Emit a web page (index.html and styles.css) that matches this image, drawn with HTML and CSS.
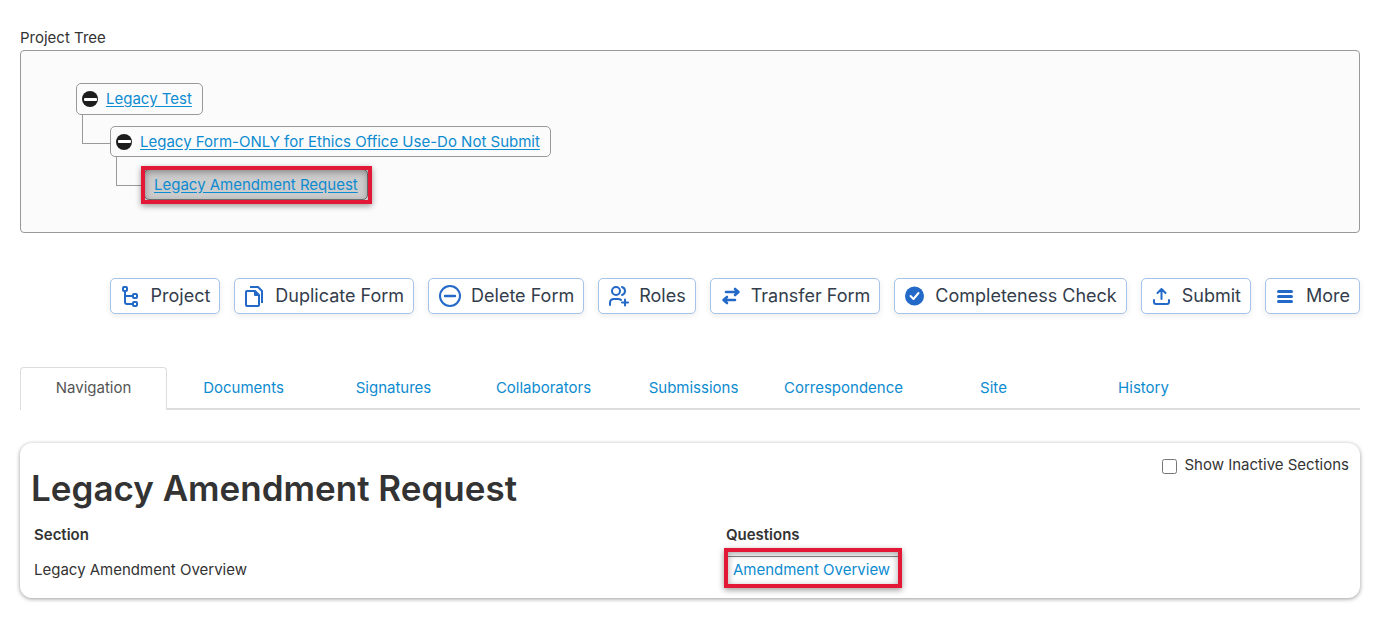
FILE: index.html
```html
<!DOCTYPE html>
<html lang="en">
<head>
<meta charset="utf-8">
<meta name="viewport" content="width=device-width, initial-scale=1">
<title>Legacy Amendment Request</title>
<link rel="stylesheet" href="styles.css">
</head>
<body>
<section class="project">
  <h2 class="project-label">Project Tree</h2>
  <div class="tree">
    <div class="node">
      <button class="toggle" type="button" aria-label="Collapse"></button>
      <a href="#">Legacy Test</a>
    </div>
    <div class="branch">
      <span class="connector"></span>
      <div class="branch-body">
        <div class="node">
          <button class="toggle" type="button" aria-label="Collapse"></button>
          <a href="#">Legacy Form-ONLY for Ethics Office Use-Do Not Submit</a>
        </div>
        <div class="branch">
          <span class="connector"></span>
          <div class="branch-body">
            <div class="node node-current"><a href="#">Legacy Amendment Request</a></div>
          </div>
        </div>
      </div>
    </div>
  </div>
</section>

<div class="actions">
  <button class="action" type="button">
    <svg width="20" height="24" viewBox="0 0 20 24" fill="none" stroke="currentColor" stroke-width="2"><rect x="2" y="3" width="4" height="4" rx="1"/><path d="M4 7v11q0 2 2 2h6M4 12h8"/><rect x="12" y="10" width="4" height="4" rx="1"/><rect x="12" y="18" width="4" height="4" rx="1"/></svg>
    Project</button>
  <button class="action" type="button">
    <svg width="20" height="24" viewBox="0 0 20 24" fill="none" stroke="currentColor" stroke-width="2" stroke-linejoin="round"><path d="M2 7h8l4 4v10q0 1-1 1H2q-1 0-1-1V8q0-1 1-1z"/><path d="M10 7v4h4" fill="currentColor"/><path d="M5 3h8l4 4v12"/></svg>
    Duplicate Form</button>
  <button class="action" type="button">
    <svg width="22" height="24" viewBox="0 0 22 24" fill="none" stroke="currentColor" stroke-width="2"><circle cx="11" cy="12" r="10"/><path d="M6 12h10" stroke-width="2.4" stroke-linecap="round"/></svg>
    Delete Form</button>
  <button class="action" type="button">
    <svg width="20" height="24" viewBox="0 0 20 24" fill="none" stroke="currentColor" stroke-width="2" stroke-linecap="round"><circle cx="7" cy="7" r="4"/><path d="M13 3q3 1 3 4t-3 4M1 21v-2q0-4 4-4h4q2 0 3 1M16 15.500v6M13 18.500h6"/></svg>
    Roles</button>
  <button class="action" type="button">
    <svg width="20" height="24" viewBox="0 0 20 24" fill="none" stroke="currentColor" stroke-width="2.600" stroke-linecap="round" stroke-linejoin="round"><path d="M5 8h12M14 5l3.500 3-3.500 3M14 16H3M6 13l-3.500 3 3.500 3"/></svg>
    Transfer Form</button>
  <button class="action" type="button">
    <svg width="20" height="24" viewBox="0 0 20 24" fill="none"><circle cx="9.500" cy="12" r="9.500" fill="currentColor"/><path d="M5.500 12l3 3 5-6" stroke="#fff" stroke-width="2" stroke-linecap="round" stroke-linejoin="round"/></svg>
    Completeness Check</button>
  <button class="action" type="button">
    <svg width="20" height="24" viewBox="0 0 20 24" fill="none" stroke="currentColor" stroke-width="2" stroke-linecap="round" stroke-linejoin="round"><path d="M9.500 15V5M5.500 9l4-4 4 4M2 16v2q0 2 2 2h11q2 0 2-2v-2"/></svg>
    Submit</button>
  <button class="action" type="button">
    <svg width="20" height="24" viewBox="0 0 20 24" fill="none" stroke="currentColor" stroke-width="3" stroke-linecap="round"><path d="M2.500 7.500h13M2.500 12.500h13M2.500 17.500h13"/></svg>
    More</button>
</div>

<nav class="tabs">
  <a class="tab tab-active" href="#">Navigation</a>
  <a class="tab" href="#">Documents</a>
  <a class="tab" href="#">Signatures</a>
  <a class="tab" href="#">Collaborators</a>
  <a class="tab" href="#">Submissions</a>
  <a class="tab" href="#">Correspondence</a>
  <a class="tab" href="#">Site</a>
  <a class="tab" href="#">History</a>
</nav>

<main class="card">
  <div class="card-head">
    <h1 class="card-title">Legacy Amendment Request</h1>
    <label class="inactive"><input class="inactive-box" type="checkbox">Show Inactive Sections</label>
  </div>
  <table class="sections">
    <thead><tr><th class="col-section">Section</th><th>Questions</th></tr></thead>
    <tbody><tr><td>Legacy Amendment Overview</td><td><a class="question" href="#">Amendment Overview</a></td></tr></tbody>
  </table>
</main>
</body>
</html>
```

FILE: styles.css
```css
* { box-sizing: border-box; }

body {
  margin: 0;
  padding: 28px 20px;
  background: #fff;
  color: #333;
  font: 15px/20px Inter, "Liberation Sans", sans-serif;
}

a { color: #0d8bd0; }

.project-label { margin: 0 0 2px; font-size: 15px; font-weight: 400; line-height: 20px; }

.tree {
  padding: 32px 55px;
  border: 1px solid #999;
  border-radius: 4px;
  background: #fbfbfb;
}

.node {
  position: relative;
  display: flex;
  align-items: center;
  gap: 8px;
  width: max-content;
  height: 32px;
  padding: 0 10px 0 5px;
  border: 1px solid #999;
  border-radius: 5px;
}

.branch .node { height: 31px; }

.node a { text-underline-offset: 2px; }

.toggle {
  display: grid;
  place-items: center;
  width: 16px;
  height: 16px;
  padding: 0;
  border: 0;
  border-radius: 50%;
  background: #1c1c1c;
}

.toggle::before { content: ""; width: 13px; height: 3px; border-radius: 1px; background: #fff; }

.branch { display: flex; padding-left: 6px; }

.connector {
  width: 28px;
  height: 29px;
  border: solid #999;
  border-width: 0 0 1px 1px;
}

.branch-body { padding-top: 11px; }

.branch .branch .branch-body { padding-top: 12px; }

.node-current { padding: 0 9px; background: #ccc; border-color: #777; }

.node-current::after,
.question::after {
  content: "";
  position: absolute;
  inset: -4px -5px -5px -4px;
  border: 4px solid #e31837;
  box-shadow: 0 2px 6px rgba(0, 0, 0, .4), inset 0 2px 7px rgba(0, 0, 0, .35);
  pointer-events: none;
}

.actions {
  display: flex;
  flex-wrap: wrap;
  justify-content: flex-end;
  gap: 14px;
  margin-top: 45px;
}

.action {
  display: flex;
  align-items: center;
  gap: 10px;
  height: 36px;
  padding: 0 9px 0 10px;
  border: 1px solid #a4c2ec;
  border-radius: 5px;
  background: #fff;
  box-shadow: 0 2px 6px rgba(0, 0, 0, .08);
  color: #333d4b;
  font: 400 18px/24px Inter, "Liberation Sans", sans-serif;
}

.action svg { flex: none; color: #2369c8; }

.tabs {
  display: flex;
  gap: 3px;
  margin-top: 53px;
  border-bottom: 2px solid #ddd;
}

.tab {
  width: 147px;
  height: 43px;
  margin-bottom: -2px;
  padding: 10px 0;
  border: 1px solid transparent;
  text-align: center;
  text-decoration: none;
}

.tab-active {
  border-color: #ddd;
  border-bottom: 0;
  border-radius: 4px 4px 0 0;
  background: #fff;
  color: #555;
}

.card {
  margin-top: 33px;
  padding: 12px 11px 10px;
  border-radius: 12px;
  background: #fff;
  box-shadow: 0 1px 4px rgba(0, 0, 0, .4);
}

.card-head { display: flex; justify-content: space-between; align-items: flex-start; }

.card-title { margin: 9px 0 0; font-size: 35px; font-weight: 600; line-height: 48px; }

.inactive { display: flex; align-items: center; gap: 8px; }

.inactive-box { width: 15px; height: 15px; margin: 2px 0 0; }

.sections { width: 100%; margin-top: 7px; border-collapse: collapse; }

.sections th,
.sections td { padding: 6px 3px; text-align: left; line-height: 20px; }

.sections th { font-weight: 600; }

.sections td { padding: 9px 3px 8px; }

.col-section { width: 52.5%; }

.question {
  position: relative;
  display: inline-block;
  padding: 0 8px 0 7px;
  text-decoration: none;
}

.question::before {
  content: "";
  position: absolute;
  inset: -4px 0 auto;
  border-top: 1px solid #888;
}

.question::after { inset: -12px -4px -8px -2px; }
```
